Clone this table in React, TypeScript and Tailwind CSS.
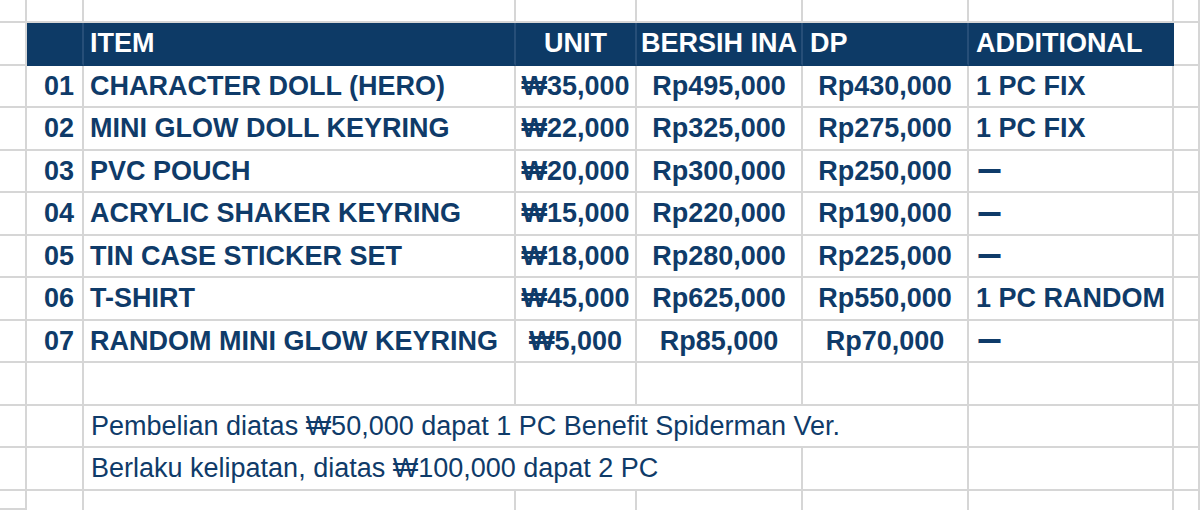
import React from 'react';

// Price list laid out like a spreadsheet: fixed column widths,
// light grid lines and a navy header band.
type Row = {
  no: string;
  item: string;
  unit: string;
  bersih: string;
  dp: string;
  additional: string;
};

const rows: Row[] = [
  { no: '01', item: 'CHARACTER DOLL (HERO)', unit: '₩35,000', bersih: 'Rp495,000', dp: 'Rp430,000', additional: '1 PC FIX' },
  { no: '02', item: 'MINI GLOW DOLL KEYRING', unit: '₩22,000', bersih: 'Rp325,000', dp: 'Rp275,000', additional: '1 PC FIX' },
  { no: '03', item: 'PVC POUCH', unit: '₩20,000', bersih: 'Rp300,000', dp: 'Rp250,000', additional: '' },
  { no: '04', item: 'ACRYLIC SHAKER KEYRING', unit: '₩15,000', bersih: 'Rp220,000', dp: 'Rp190,000', additional: '' },
  { no: '05', item: 'TIN CASE STICKER SET', unit: '₩18,000', bersih: 'Rp280,000', dp: 'Rp225,000', additional: '' },
  { no: '06', item: 'T-SHIRT', unit: '₩45,000', bersih: 'Rp625,000', dp: 'Rp550,000', additional: '1 PC RANDOM' },
  { no: '07', item: 'RANDOM MINI GLOW KEYRING', unit: '₩5,000', bersih: 'Rp85,000', dp: 'Rp70,000', additional: '' },
];

const cell = 'flex items-center border-r-2 border-b-2 border-[#d6d6d6] overflow-hidden whitespace-nowrap';
// last visible row is cut by the window, so it has no bottom line
const tailCell = 'border-r-2 border-[#d6d6d6]';
const head = 'flex items-center border-r-2 border-b-2 border-[#264e78] border-b-[#0d3a66] bg-[#0d3a66] text-white font-bold overflow-hidden whitespace-nowrap';

const Dash: React.FC = () => (
  <span className="font-['Noto_Sans_CJK_JP',sans-serif] font-bold text-[27px] leading-none">ー</span>
);

const App: React.FC = () => {
  return (
    <div className="w-[1200px] h-[510px] bg-white overflow-hidden font-['Liberation_Sans','Arial','DejaVu_Sans',sans-serif] text-[27px] text-[#0f3b69]">
      <div className="grid h-full grid-cols-[27px_57px_432px_121px_166px_166px_205px_26px] grid-rows-[23px_repeat(11,42.5px)_1fr]">
        {/* top partial row */}
        {Array.from({ length: 8 }).map((_, i) => (
          <div key={`t${i}`} className={cell} />
        ))}

        {/* header */}
        <div className={cell} />
        <div className={head} />
        <div className={`${head} pl-[6px]`}>ITEM</div>
        <div className={`${head} justify-center`}>UNIT</div>
        <div className={`${head} justify-center`}>BERSIH INA</div>
        <div className={`${head} pl-[7px]`}>DP</div>
        <div className={`${head} pl-[7px] border-r-[#0d3a66]`}>ADDITIONAL</div>
        <div className={cell} />

        {rows.map((r) => (
          <React.Fragment key={r.no}>
            <div className={cell} />
            <div className={`${cell} justify-end pr-[8px] font-bold`}>{r.no}</div>
            <div className={`${cell} pl-[6px] font-bold`}>{r.item}</div>
            <div className={`${cell} justify-center font-bold`}>{r.unit}</div>
            <div className={`${cell} justify-center font-bold`}>{r.bersih}</div>
            <div className={`${cell} justify-center font-bold`}>{r.dp}</div>
            <div className={`${cell} pl-[7px] font-bold`}>{r.additional || <Dash />}</div>
            <div className={cell} />
          </React.Fragment>
        ))}

        {/* blank row */}
        {Array.from({ length: 8 }).map((_, i) => (
          <div key={`b${i}`} className={cell} />
        ))}

        {/* notes */}
        <div className={cell} />
        <div className={cell} />
        <div className={`${cell} col-span-4 pl-[7px]`}>Pembelian diatas ₩50,000 dapat 1 PC Benefit Spiderman Ver.</div>
        <div className={cell} />
        <div className={cell} />

        <div className={cell} />
        <div className={cell} />
        <div className={`${cell} col-span-3 pl-[7px]`}>Berlaku kelipatan, diatas ₩100,000 dapat 2 PC</div>
        <div className={cell} />
        <div className={cell} />
        <div className={cell} />
        <div className={cell} />

        {/* bottom partial row */}
        {Array.from({ length: 8 }).map((_, i) => (
          <div key={`e${i}`} className={tailCell} />
        ))}
      </div>
    </div>
  );
};

export default App;
